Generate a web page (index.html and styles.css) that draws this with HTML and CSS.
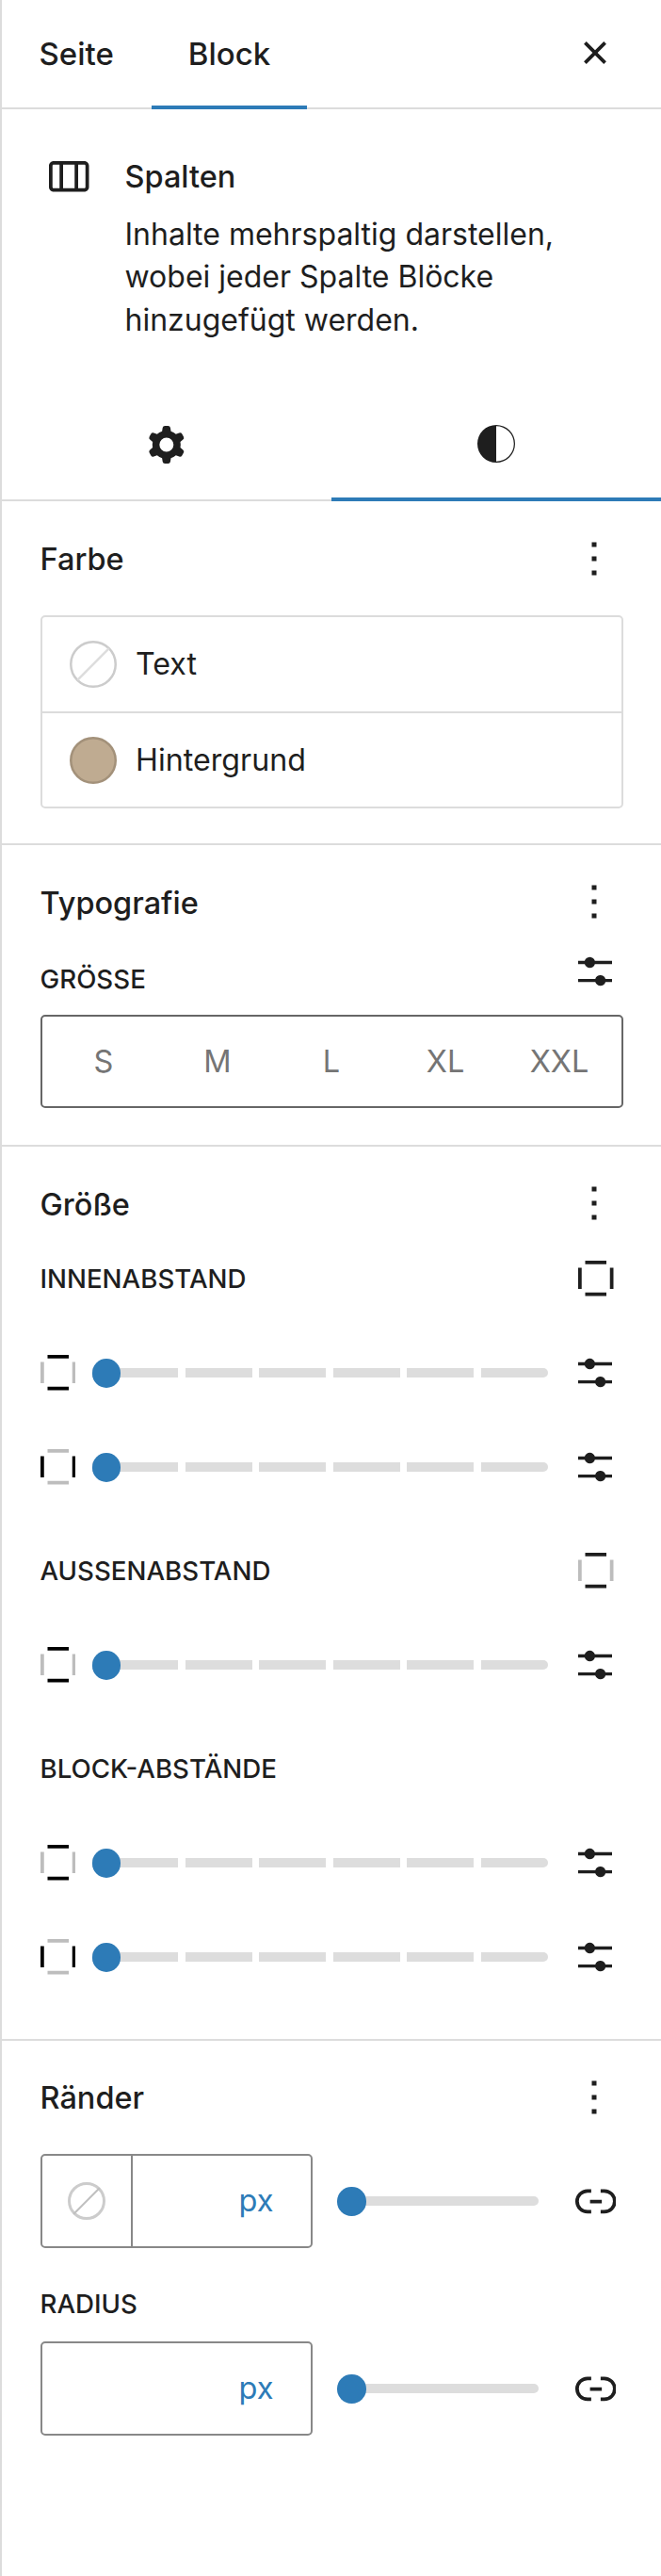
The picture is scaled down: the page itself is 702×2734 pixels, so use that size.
FILE: index.html
```html
<!DOCTYPE html>
<html lang="de">
<head>
<meta charset="utf-8">
<title>Spalten</title>
<link rel="stylesheet" href="styles.css">
</head>
<body>
<aside class="panel">
  <header class="top">
    <div class="tab">Seite</div>
    <div class="tab active">Block</div>
    <svg class="close" viewBox="0 0 24 24"><path d="M12 13.06l3.712 3.713 1.061-1.06L13.061 12l3.712-3.712-1.06-1.06L12 10.938 8.288 7.227l-1.061 1.06L10.939 12l-3.712 3.712 1.06 1.061L12 13.061z"/></svg>
  </header>

  <div class="card">
    <svg class="card-icon" viewBox="0 0 24 24"><path d="M19 6H6c-1.1 0-2 .9-2 2v9c0 1.1.9 2 2 2h13c1.1 0 2-.9 2-2V8c0-1.1-.9-2-2-2zm-4.1 1.5v10H10v-10h4.9zM5.5 17V8c0-.3.2-.5.5-.5h2.5v10H6c-.3 0-.5-.2-.5-.5zm14 0c0 .3-.2.5-.5.5h-2.6v-10H19c.3 0 .5.2.5.5v9z"/></svg>
    <div class="card-body">
      <h2 class="card-title">Spalten</h2>
      <p class="card-desc">Inhalte mehrspaltig darstellen, wobei jeder Spalte Blöcke hinzugefügt werden.</p>
    </div>
  </div>

  <nav class="subtabs">
    <div class="subtab">
      <svg class="icon60" viewBox="0 0 24 24"><path fill-rule="evenodd" clip-rule="evenodd" d="M10.289 4.836A1 1 0 0111.275 4h1.306a1 1 0 01.987.836l.244 1.466c.787.26 1.503.679 2.108 1.218l1.393-.522a1 1 0 011.216.437l.653 1.13a1 1 0 01-.23 1.273l-1.148.944a6.025 6.025 0 010 2.435l1.149.946a1 1 0 01.23 1.272l-.653 1.13a1 1 0 01-1.216.437l-1.394-.522c-.605.54-1.32.958-2.108 1.218l-.244 1.466a1 1 0 01-.987.836h-1.306a1 1 0 01-.986-.836l-.244-1.466a5.995 5.995 0 01-2.108-1.218l-1.394.522a1 1 0 01-1.217-.436l-.653-1.131a1 1 0 01.23-1.272l1.149-.946a6.026 6.026 0 010-2.435l-1.148-.944a1 1 0 01-.23-1.272l.653-1.131a1 1 0 011.217-.437l1.393.522a5.994 5.994 0 012.108-1.218l.244-1.466zM14.929 12a3 3 0 11-6 0 3 3 0 016 0z"/></svg>
    </div>
    <div class="subtab active">
      <svg class="icon60" viewBox="0 0 24 24"><path d="M12 4a8 8 0 1 0 0 16 8 8 0 0 0 0-16zm0 15.5v-15a7.5 7.5 0 0 1 0 15z"/></svg>
    </div>
  </nav>

  <section class="section farbe">
    <div class="head">
      <h2 class="head-title">Farbe</h2>
      <svg class="more" viewBox="0 0 24 24"><path d="M13 19h-2v-2h2v2zm0-6h-2v-2h2v2zm0-6h-2V5h2v2z"/></svg>
    </div>
    <div class="colors">
      <div class="color-row">
        <svg class="swatch" viewBox="0 0 50 50"><circle cx="25" cy="25" r="23.75" fill="#fff" stroke="#ccc" stroke-width="2.5"/><path d="M8.2 41.8 41.8 8.2" stroke="#ddd" stroke-width="2.5"/></svg>
        <span>Text</span>
      </div>
      <div class="color-row">
        <svg class="swatch" viewBox="0 0 50 50"><circle cx="25" cy="25" r="23.75" fill="#bfab91" stroke="#a3917a" stroke-width="2.5"/></svg>
        <span>Hintergrund</span>
      </div>
    </div>
  </section>

  <section class="section typo">
    <div class="head">
      <h2 class="head-title">Typografie</h2>
      <svg class="more" viewBox="0 0 24 24"><path d="M13 19h-2v-2h2v2zm0-6h-2v-2h2v2zm0-6h-2V5h2v2z"/></svg>
    </div>
    <div class="size-label">
      <span class="label">GRÖSSE</span>
      <svg class="tune" viewBox="4 4 16 16"><use href="#tune"/></svg>
    </div>
    <div class="sizes">
      <span>S</span><span>M</span><span>L</span><span>XL</span><span>XXL</span>
    </div>
  </section>

  <section class="section groesse">
    <div class="head">
      <h2 class="head-title">Größe</h2>
      <svg class="more" viewBox="0 0 24 24"><path d="M13 19h-2v-2h2v2zm0-6h-2v-2h2v2zm0-6h-2V5h2v2z"/></svg>
    </div>

    <div class="label-row">
      <span class="label">INNENABSTAND</span>
      <svg class="sides" viewBox="4.5 4.5 15 15"><path class="dark" d="M7.5 4.5h9V6h-9zM7.5 18h9v1.5h-9z"/><path class="dark" d="M4.5 7.5H6v9H4.5zM18 7.5h1.5v9H18z"/></svg>
    </div>
    <div class="spacing-row">
      <svg class="sides" viewBox="4.5 4.5 15 15"><path class="on" d="M7.5 4.5h9V6h-9zM7.5 18h9v1.5h-9z"/><path class="off" d="M4.5 7.5H6v9H4.5zM18 7.5h1.5v9H18z"/></svg>
      <div class="track"><i></i><i></i><i></i><i></i><i></i><i></i><b class="thumb"></b></div>
      <svg class="tune" viewBox="4 4 16 16"><use href="#tune"/></svg>
    </div>
    <div class="spacing-row">
      <svg class="sides" viewBox="4.5 4.5 15 15"><path class="off" d="M7.5 4.5h9V6h-9zM7.5 18h9v1.5h-9z"/><path class="on" d="M4.5 7.5H6v9H4.5zM18 7.5h1.5v9H18z"/></svg>
      <div class="track"><i></i><i></i><i></i><i></i><i></i><i></i><b class="thumb"></b></div>
      <svg class="tune" viewBox="4 4 16 16"><use href="#tune"/></svg>
    </div>

    <div class="label-row later">
      <span class="label">AUSSENABSTAND</span>
      <svg class="sides" viewBox="4.5 4.5 15 15"><path class="dark" d="M7.5 4.5h9V6h-9zM7.5 18h9v1.5h-9z"/><path class="off" d="M4.5 7.5H6v9H4.5zM18 7.5h1.5v9H18z"/></svg>
    </div>
    <div class="spacing-row">
      <svg class="sides" viewBox="4.5 4.5 15 15"><path class="on" d="M7.5 4.5h9V6h-9zM7.5 18h9v1.5h-9z"/><path class="off" d="M4.5 7.5H6v9H4.5zM18 7.5h1.5v9H18z"/></svg>
      <div class="track"><i></i><i></i><i></i><i></i><i></i><i></i><b class="thumb"></b></div>
      <svg class="tune" viewBox="4 4 16 16"><use href="#tune"/></svg>
    </div>

    <div class="label-row later">
      <span class="label">BLOCK-ABSTÄNDE</span>
    </div>
    <div class="spacing-row">
      <svg class="sides" viewBox="4.5 4.5 15 15"><path class="on" d="M7.5 4.5h9V6h-9zM7.5 18h9v1.5h-9z"/><path class="off" d="M4.5 7.5H6v9H4.5zM18 7.5h1.5v9H18z"/></svg>
      <div class="track"><i></i><i></i><i></i><i></i><i></i><i></i><b class="thumb"></b></div>
      <svg class="tune" viewBox="4 4 16 16"><use href="#tune"/></svg>
    </div>
    <div class="spacing-row">
      <svg class="sides" viewBox="4.5 4.5 15 15"><path class="off" d="M7.5 4.5h9V6h-9zM7.5 18h9v1.5h-9z"/><path class="on" d="M4.5 7.5H6v9H4.5zM18 7.5h1.5v9H18z"/></svg>
      <div class="track"><i></i><i></i><i></i><i></i><i></i><i></i><b class="thumb"></b></div>
      <svg class="tune" viewBox="4 4 16 16"><use href="#tune"/></svg>
    </div>
  </section>

  <section class="section raender">
    <div class="head">
      <h2 class="head-title">Ränder</h2>
      <svg class="more" viewBox="0 0 24 24"><path d="M13 19h-2v-2h2v2zm0-6h-2v-2h2v2zm0-6h-2V5h2v2z"/></svg>
    </div>
    <div class="border-row">
      <div class="unit-box">
        <div class="unit-swatch">
          <svg class="swatch-small" viewBox="0 0 40 40"><circle cx="20" cy="20" r="18.5" fill="#fff" stroke="#ccc" stroke-width="3"/><path d="M6.3 33.7 33.7 6.3" stroke="#bfbfbf" stroke-width="2"/></svg>
        </div>
        <span class="unit">px</span>
      </div>
      <div class="plain-track"><b class="thumb"></b></div>
      <svg class="link" viewBox="3.25 3.25 17.5 17.5"><path d="M10 17.389H8.444A5.194 5.194 0 1 1 8.444 7H10v1.5H8.444a3.694 3.694 0 0 0 0 7.389H10v1.5ZM14 7h1.556a5.194 5.194 0 0 1 0 10.39H14v-1.5h1.556a3.694 3.694 0 0 0 0-7.39H14V7Zm-4.5 6h5v-1.5h-5V13Z"/></svg>
    </div>
    <div class="radius-label"><span class="label">RADIUS</span></div>
    <div class="border-row">
      <div class="unit-box">
        <span class="unit">px</span>
      </div>
      <div class="plain-track"><b class="thumb"></b></div>
      <svg class="link" viewBox="3.25 3.25 17.5 17.5"><path d="M10 17.389H8.444A5.194 5.194 0 1 1 8.444 7H10v1.5H8.444a3.694 3.694 0 0 0 0 7.389H10v1.5ZM14 7h1.556a5.194 5.194 0 0 1 0 10.39H14v-1.5h1.556a3.694 3.694 0 0 0 0-7.39H14V7Zm-4.5 6h5v-1.5h-5V13Z"/></svg>
    </div>
  </section>

  <svg class="defs" aria-hidden="true"><defs><path id="tune" d="M14.5 13.8c-1.1 0-2.1.7-2.4 1.8H4V17h8.1c.3 1 1.3 1.8 2.4 1.8s2.1-.7 2.4-1.8H20v-1.5h-3.1c-.3-1-1.3-1.7-2.4-1.7zM11.9 7c-.3-1-1.3-1.8-2.4-1.8S7.4 6 7.1 7H4v1.5h3.1c.3 1 1.3 1.8 2.4 1.8s2.1-.7 2.4-1.8H20V7h-8.1z"/></defs></svg>
</aside>
</body>
</html>
```

FILE: styles.css
```css
* { box-sizing: border-box; }
html, body { margin: 0; padding: 0; background: #fff; }
body {
  font-family: Inter, "Noto Sans", sans-serif;
  font-size: 32.5px;
  color: #1e1e1e;
}
svg { display: block; fill: #1e1e1e; flex: none; }
h2, p { margin: 0; }

.panel {
  width: 702px;
  height: 2734px;
  border-left: 2px solid #dcdcdc;
  overflow: hidden;
}
.defs { width: 0; height: 0; }

/* Header */
.top {
  display: flex;
  height: 116px;
  border-bottom: 2px solid #dcdcdc;
  font-size: 33px;
  font-weight: 500;
  line-height: 114px;
}
.tab { padding: 0 40px 0 39.5px; height: 116px; }
.tab.active { padding: 0 39px; border-bottom: 4px solid #2d7bb7; }
.close { width: 60px; height: 60px; margin: 26px 40px 0 auto; }

/* Block card */
.card {
  display: flex;
  height: 296px;
  padding: 40px 40px 0 40px;
}
.card-icon { width: 60px; height: 60px; margin-right: 30.5px; }
.card-body { flex: 1; }
.card-title { font-size: 32.5px; font-weight: 500; line-height: 46px; margin-top: 8.5px; }
.card-desc { margin-top: 15px; font-size: 32px; line-height: 45.5px; }

/* Sub tabs */
.subtabs {
  display: flex;
  height: 120px;
  border-bottom: 2px solid #dcdcdc;
}
.subtab {
  flex: 1;
  height: 120px;
  display: flex;
  align-items: center;
  justify-content: center;
}
.subtab.active { border-bottom: 4px solid #2d7bb7; padding-top: 2px; }
.icon60 { width: 60px; height: 60px; }

/* Sections */
.section {
  padding: 30px 40.5px 0;
  border-bottom: 2px solid #dcdcdc;
}
.farbe { height: 365px; padding-top: 31px; }
.typo { height: 320px; }
.groesse { height: 949px; }
.raender { border-bottom: 0; }

.head {
  display: flex;
  justify-content: space-between;
  align-items: center;
  height: 60px;
}
.head-title { font-size: 32.5px; font-weight: 500; line-height: 60px; padding-top: 3px; }
.farbe .head-title { padding-top: 1px; }
.raender .head-title { padding-top: 1.5px; }
.more { width: 60px; height: 60px; margin-right: 0.5px; }

/* Colors */
.colors {
  margin-top: 30px;
  height: 205px;
  border: 2px solid #dcdcdc;
  border-radius: 5px;
}
.color-row {
  display: flex;
  align-items: center;
  height: 100px;
  padding-left: 29.5px;
}
.color-row + .color-row { border-top: 2px solid #dcdcdc; height: 101px; }
.swatch { width: 50px; height: 50px; margin-right: 20px; }
.color-row span { font-size: 32.2px; line-height: 46px; }

/* Labels */
.label {
  font-size: 27.7px;
  font-weight: 500;
  line-height: 40px;
}
.size-label {
  display: flex;
  justify-content: space-between;
  align-items: flex-end;
  height: 50px;
  margin-top: 18px;
}
.size-label .label { margin-bottom: -3.5px; }
.tune { width: 36px; height: 36px; margin-right: 11.5px; }
.size-label .tune { align-self: center; margin-top: 2px; }
.label-row {
  display: flex;
  justify-content: space-between;
  align-items: center;
  height: 60px;
  margin-top: 20px;
}
.label-row.later { margin-top: 50px; }
.label-row .sides { margin-right: 10px; }

.sizes {
  display: grid;
  grid-template-columns: repeat(5, 1fr);
  align-items: center;
  height: 99px;
  margin-top: 21.5px;
  padding: 2px 5px 0;
  border: 2px solid #666;
  border-radius: 5px;
  color: #757575;
  text-align: center;
  line-height: 46px;
}

/* Spacing rows */
.spacing-row {
  display: flex;
  align-items: center;
  height: 60px;
  margin-top: 40px;
}
.sides { width: 37.5px; height: 37.5px; }
.sides .dark { fill: #1e1e1e; }
.sides .on { fill: #000; }
.sides .off { fill: #bdbdbd; }

.track {
  position: relative;
  display: grid;
  grid-template-columns: 92fr repeat(5, 71fr);
  column-gap: 7.5px;
  width: 484px;
  height: 10px;
  margin-left: 17.5px;
  margin-right: 32px;
}
.track i { background: #ddd; }
.track i:last-of-type { border-radius: 0 5px 5px 0; }
.thumb {
  position: absolute;
  left: 0;
  top: -10px;
  width: 30.5px;
  height: 30.5px;
  border-radius: 50%;
  background: #2d7bb7;
}

/* Borders */
.raender .head { margin-bottom: 30px; }
.border-row { display: flex; align-items: center; }
.unit-box {
  display: flex;
  align-items: center;
  justify-content: flex-end;
  width: 289px;
  height: 100px;
  padding-right: 39px;
  border: 2px solid #888;
  border-radius: 5px;
}
.unit-swatch {
  display: flex;
  align-items: center;
  justify-content: center;
  width: 96.5px;
  height: 100%;
  margin-right: auto;
  border-right: 2px solid #888;
}
.swatch-small { width: 40px; height: 40px; }
.unit { color: #2d7bb7; line-height: 46px; }
.plain-track {
  position: relative;
  width: 214px;
  height: 10px;
  margin-left: 26.5px;
  margin-right: 38.5px;
  border-radius: 5px;
  background: #ddd;
}
.link { width: 43.75px; height: 43.75px; }
.radius-label { height: 40px; margin: 39px 0 20px; display: flex; align-items: center; }
```
